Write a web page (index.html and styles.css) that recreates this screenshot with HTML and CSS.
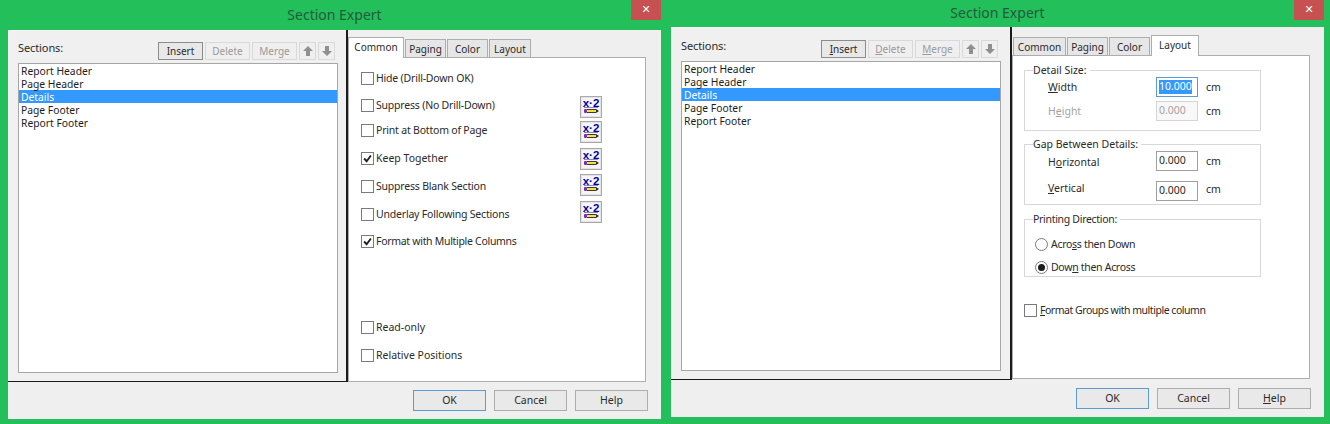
FILE: index.html
```html
<!DOCTYPE html>
<html lang="en">
<head>
<meta charset="utf-8">
<title>Section Expert</title>
<link rel="stylesheet" href="styles.css">
</head>
<body>
<svg class="defs" aria-hidden="true">
  <symbol id="formula" viewBox="0 0 22 22">
    <rect x="0.5" y="0.5" width="21" height="21" fill="#e4e4e4" stroke="#a8a8a8"/>
    <rect x="2" y="2" width="18" height="18" fill="#f5f5f8"/>
    <text x="11" y="11" text-anchor="middle" class="formula-text">x·2</text>
    <rect x="4" y="11" width="14" height="1" fill="#0000a0" opacity="0.45"/>
    <rect x="4" y="13" width="3" height="4" rx="1" fill="#7a2fa8"/>
    <rect x="7" y="13" width="9" height="4" fill="#f4e23a"/>
    <rect x="7" y="13" width="9" height="1" fill="#3a3a3a"/>
    <rect x="7" y="16" width="9" height="1" fill="#3a3a3a"/>
    <path d="M16 13l3 2-3 2z" fill="#2b2b2b"/>
  </symbol>
  <symbol id="up" viewBox="0 0 12 12"><path d="M6 1l5 5H8v5H4V6H1z"/></symbol>
  <symbol id="down" viewBox="0 0 12 12"><path d="M6 11L1 6h3V1h4v5h3z"/></symbol>
  <symbol id="tick" viewBox="0 0 13 13"><path d="M2.5 6.5l3 3.2 5-6.7" fill="none" stroke="#1f1f1f" stroke-width="2.2"/></symbol>
</svg>

<section class="window window-common">
  <header class="titlebar"><span></span><h1 class="title">Section Expert</h1><span class="close">✕</span></header>
  <div class="client">
    <div class="main">
      <div class="pane">
        <div class="toolbar">
          <span class="sections-label">Sections:</span>
          <button class="tool strong">Insert</button>
          <button class="tool off">Delete</button>
          <button class="tool off">Merge</button>
          <button class="arrow"><svg><use href="#up"/></svg></button>
          <button class="arrow"><svg><use href="#down"/></svg></button>
        </div>
        <ul class="list">
          <li>Report Header</li>
          <li>Page Header</li>
          <li class="selected">Details</li>
          <li>Page Footer</li>
          <li>Report Footer</li>
        </ul>
      </div>
      <div class="tabs-area">
        <div class="tabs">
          <span class="tab active w-common-on">Common</span>
          <span class="tab w-paging">Paging</span>
          <span class="tab w-color">Color</span>
          <span class="tab w-layout">Layout</span>
        </div>
        <div class="panel panel-common">
          <div class="options">
            <label class="option o1 tight"><span class="box"></span>Hide (Drill-Down OK)</label>
            <label class="option o2 tight"><span class="box"></span>Suppress (No Drill-Down)</label>
            <label class="option o3 tight"><span class="box"></span>Print at Bottom of Page</label>
            <label class="option o4"><span class="box"><svg><use href="#tick"/></svg></span>Keep Together</label>
            <label class="option o4 tight"><span class="box"></span>Suppress Blank Section</label>
            <label class="option o4 tight"><span class="box"></span>Underlay Following Sections</label>
            <label class="option o2 tighter"><span class="box"><svg><use href="#tick"/></svg></span>Format with Multiple Columns</label>
            <label class="option o8"><span class="box"></span>Read-only</label>
            <label class="option o4"><span class="box"></span>Relative Positions</label>
          </div>
          <div class="formulas">
            <svg class="formula"><use href="#formula"/></svg>
            <svg class="formula f2"><use href="#formula"/></svg>
            <svg class="formula f3"><use href="#formula"/></svg>
            <svg class="formula f4"><use href="#formula"/></svg>
            <svg class="formula f3"><use href="#formula"/></svg>
          </div>
        </div>
      </div>
    </div>
    <footer class="footer">
      <button class="action default">OK</button>
      <button class="action">Cancel</button>
      <button class="action">Help</button>
    </footer>
  </div>
</section>

<section class="window window-layout">
  <header class="titlebar"><span></span><h1 class="title">Section Expert</h1><span class="close">✕</span></header>
  <div class="client">
    <div class="main">
      <div class="pane">
        <div class="toolbar">
          <span class="sections-label">Sections:</span>
          <button class="tool strong"><u>I</u>nsert</button>
          <button class="tool off"><u>D</u>elete</button>
          <button class="tool off"><u>M</u>erge</button>
          <button class="arrow"><svg><use href="#up"/></svg></button>
          <button class="arrow"><svg><use href="#down"/></svg></button>
        </div>
        <ul class="list">
          <li>Report Header</li>
          <li>Page Header</li>
          <li class="selected">Details</li>
          <li>Page Footer</li>
          <li>Report Footer</li>
        </ul>
      </div>
      <div class="tabs-area">
        <div class="tabs">
          <span class="tab w-common">Common</span>
          <span class="tab w-paging">Paging</span>
          <span class="tab w-color">Color</span>
          <span class="tab active w-layout-on">Layout</span>
        </div>
        <div class="panel panel-layout">
          <fieldset class="group group-size">
            <legend>Detail Size:</legend>
            <div class="field"><span class="field-label"><u>W</u>idth</span><span class="input selected-input"><span class="selection">10.000</span></span><span class="unit">cm</span></div>
            <div class="field disabled"><span class="field-label">H<u>e</u>ight</span><span class="input">0.000</span><span class="unit">cm</span></div>
          </fieldset>
          <fieldset class="group group-gap">
            <legend>Gap Between Details:</legend>
            <div class="field"><span class="field-label">H<u>o</u>rizontal</span><span class="input">0.000</span><span class="unit">cm</span></div>
            <div class="field"><span class="field-label raised"><u>V</u>ertical</span><span class="input">0.000</span><span class="unit raised-unit">cm</span></div>
          </fieldset>
          <fieldset class="group group-print">
            <legend class="tighter">Printing Direction:</legend>
            <label class="radio-row"><span class="radio"></span><span class="tighter">Acro<u>s</u>s then Down</span></label>
            <label class="radio-row"><span class="radio on"></span><span class="tighter">Dow<u>n</u> then Across</span></label>
          </fieldset>
          <label class="option multi"><span class="box"></span><span class="tightest"><u>F</u>ormat Groups with multiple column</span></label>
        </div>
      </div>
    </div>
    <footer class="footer">
      <button class="action default">OK</button>
      <button class="action">Cancel</button>
      <button class="action"><u>H</u>elp</button>
    </footer>
  </div>
</section>
</body>
</html>
```
FILE: styles.css
```css
* { box-sizing: border-box; }
html, body { height: 100%; }
body {
  margin: 0;
  padding-left: 8px;
  display: flex;
  gap: 10px;
  align-items: flex-start;
  overflow: hidden;
  background: #22bf5b;
  font-family: "Noto Sans", sans-serif;
  font-size: 10.5px;
  line-height: 13px;
  color: #2a2a2a;
}
.defs { display: none; }
svg { display: block; }
.formula-text { font: bold 11.5px "Liberation Sans", sans-serif; fill: #0000a0; }

.tight { letter-spacing: -0.2px; }
.tighter { letter-spacing: -0.3px; }
.tightest { letter-spacing: -0.47px; }

.window { width: 653px; display: flex; flex-direction: column; }
.titlebar { display: grid; grid-template-columns: 30px 1fr 30px; align-items: start; }
.window-common .titlebar { height: 30px; }
.window-layout .titlebar { height: 27px; }
.title { margin: 0; font-size: 14px; font-weight: 400; line-height: 20px; text-align: center; color: #255a3c; }
.window-common .title { padding-top: 5px; }
.window-layout .title { padding-top: 3px; }
.close {
  height: 20px;
  background: #c75050;
  color: #fff;
  font: bold 11px/20px "DejaVu Sans", sans-serif;
  text-align: center;
}

.client { background: #efefef; display: flex; flex-direction: column; }
.window-common .client { height: 389px; }
.window-layout .client { height: 390px; }
.main { display: flex; }
.window-common .main { height: 352px; }
.window-layout .main { height: 353px; }

.pane {
  border-right: 2px solid #1b1b1b;
  border-bottom: 1px solid #1b1b1b;
  padding-left: 10px;
  background: #f0f0f0;
  box-shadow: inset 1px 1px 0 #fafafa;
}
.window-common .pane { width: 340px; padding-top: 12px; }
.window-layout .pane { width: 341px; padding-top: 13px; }
.toolbar { display: flex; height: 18px; gap: 2px; }
.window-common .toolbar { padding-right: 11px; }
.window-layout .toolbar { padding-right: 12px; }
.sections-label { flex: 1; margin-top: -1px; font-size: 11px; letter-spacing: -0.1px; }
button { font: inherit; color: inherit; padding: 0; }
.tool { width: 45px; height: 18px; font-size: 10px; background: #ececec; border: 1px solid #adadad; }
.tool.strong { border-color: #8c8c8c; background: #e8e8e8; }
.tool.off { color: #9a9a9a; border-color: #d9d9d9; background: #efefef; }
.arrow { width: 17px; height: 18px; border: 1px solid #d9d9d9; background: #efefef; display: grid; place-items: center; }
.arrow svg { width: 12px; height: 12px; fill: #8f8f8f; }
.list {
  list-style: none;
  margin: 3px 0 0;
  padding: 0;
  width: 320px;
  height: 310px;
  background: #fff;
  border: 1px solid #a6a6a6;
  font-size: 10.3px;
}
.list li { height: 13px; padding: 1px 0 0 2px; color: #1c1c1c; }
.list .selected { background: #3399ff; color: #fff; }

.tabs-area { width: 298px; }
.window-common .tabs-area { padding-top: 7px; }
.window-layout .tabs-area { padding-top: 8px; }
.tabs { display: flex; height: 20px; align-items: flex-end; gap: 1px; font-size: 10px; }
.window-layout .tabs { padding-left: 1px; }
.tab {
  height: 18px;
  text-align: center;
  line-height: 18px;
  background: #e6e6e6;
  border: 1px solid #adadad;
  border-bottom: 0;
}
.tab.active { height: 21px; margin-bottom: -1px; background: #fff; position: relative; }
.w-common-on { width: 56px; }
.w-common { width: 53px; }
.w-paging { width: 41px; }
.w-color { width: 41px; }
.w-layout { width: 42px; }
.w-layout-on { width: 48px; }

.panel { height: 324px; background: #fff; border: 1px solid #adadad; }
.panel-common { height: 325px; display: flex; padding: 13px 0 0 12px; }
.options { width: 219px; }
.option { display: flex; align-items: center; gap: 2px; height: 14px; }
.box { flex: none; width: 13px; height: 13px; border: 1px solid #7a7a7a; background: #fff; }
.box svg { width: 11px; height: 11px; }
.o2 { margin-top: 13px; }
.o3 { margin-top: 11px; }
.o4 { margin-top: 14px; }
.o8 { margin-top: 72px; }
.formulas { padding-top: 25px; }
.formula { width: 22px; height: 22px; }
.f2 { margin-top: 3px; }
.f3 { margin-top: 5px; }
.f4 { margin-top: 4px; }

.panel-layout { padding: 8px 0 0 11px; }
.group { margin: 0; padding: 0; width: 237px; border: 1px solid #d8d8d8; min-width: 0; }
.group legend { margin-left: 8px; padding: 0 3px 0 0; height: 13px; }
.group-size { height: 67px; }
.group-gap { height: 67px; margin-top: 7px; }
.group-print { height: 64px; margin-top: 8px; }
.field { display: flex; align-items: center; height: 20px; padding-left: 23px; margin-bottom: 4px; }
.group-gap .field:first-of-type .field-label { margin-top: 2px; }
.group-gap .field:last-child { margin-top: 10px; }
.field-label { width: 108px; }
.raised { margin-bottom: 6px; }
.raised-unit { margin-top: -4px; }
.input { width: 42px; height: 20px; padding: 2px 0 0 2px; border: 1px solid #a0a0a0; background: #fff; }
.unit { margin-left: 8px; }
.selected-input { border-color: #5b9bd5; }
.selection { background: #3399ff; color: #fff; display: inline-block; height: 14px; }
.disabled { color: #a3a3a3; }
.disabled .input { border-color: #d4d4d4; background: #f8f8f8; }
.disabled .unit { color: #2a2a2a; }
.radio-row { display: flex; align-items: center; gap: 3px; height: 20px; margin-left: 10px; }
.radio-row:first-of-type { margin-top: 8px; margin-bottom: 3px; }
.radio { width: 13px; height: 13px; border: 1px solid #7a7a7a; border-radius: 50%; background: #fff; display: grid; place-items: center; }
.radio.on::after { content: ""; width: 7px; height: 7px; border-radius: 50%; background: #1b1b1b; }
.multi { margin-top: 26px; gap: 3px; }

.footer { display: flex; justify-content: flex-end; gap: 8px; padding: 8px 13px 0 0; }
.action { width: 73px; height: 21px; background: #e9e9e9; border: 1px solid #adadad; }
.action.default { border-color: #5b9bd5; }
```
